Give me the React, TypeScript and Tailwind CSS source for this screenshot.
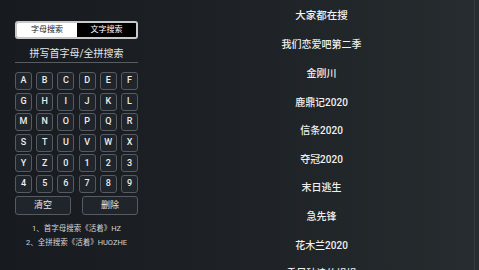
import React from 'react';

const keys = 'ABCDEFGHIJKLMNOPQRSTUVWXYZ0123456789'.split('');

const hotList = [
  '我们恋爱吧第二季',
  '金刚川',
  '鹿鼎记2020',
  '信条2020',
  '夺冠2020',
  '末日逃生',
  '急先锋',
  '花木兰2020',
  '乘风破浪的姐姐',
];

const App: React.FC = () => {
  return (
    <div
      className="w-[479px] h-[270px] overflow-hidden flex bg-gradient-to-r from-[#171a1e] via-[#1e2226] to-[#262c2f] text-white"
      style={{ fontFamily: "Roboto, 'Noto Sans CJK SC', sans-serif" }}
    >
      {/* Left: keyboard panel */}
      <div className="w-[153px] shrink-0 pl-[15px] pt-[21px] flex flex-col">
        {/* Tabs */}
        <div className="w-[123px] h-[18px] flex border-2 border-[#c9c9c9] rounded-[3px] overflow-hidden">
          <div className="w-[60px] bg-white text-[#222] text-[8px] flex items-center justify-center">字母搜索</div>
          <div className="flex-1 bg-black text-white text-[8px] flex items-center justify-center">文字搜索</div>
        </div>

        {/* Title */}
        <div className="w-[123px] mt-[6px] h-[18px] border-b border-[#585d61] text-[10px] text-[#e6e6e6] flex items-center justify-center">
          拼写首字母/全拼搜索
        </div>

        {/* Keys */}
        <div className="w-[123px] mt-[9px] grid grid-cols-6 gap-x-[4.2px] gap-y-[2.6px]">
          {keys.map(k => (
            <div
              key={k}
              className="h-[18px] rounded-[3px] border border-[#555b60] bg-[#1f252b] text-[9px] font-medium text-[#eeeeee] flex items-center justify-center"
            >
              {k}
            </div>
          ))}
        </div>

        {/* Actions */}
        <div className="w-[123px] mt-[3px] flex justify-between">
          <div className="w-[56px] h-[19px] rounded-[3px] border border-[#555b60] bg-[#1f252b] text-[9px] text-[#e6e6e6] flex items-center justify-center">清空</div>
          <div className="w-[56px] h-[19px] rounded-[3px] border border-[#555b60] bg-[#1f252b] text-[9px] text-[#e6e6e6] flex items-center justify-center">删除</div>
        </div>

        {/* Hints */}
        <div className="w-[123px] mt-[7px] flex flex-col items-center text-[7.5px] text-[#d6d6d6] leading-[14px]">
          <div>1、首字母搜索《活着》HZ</div>
          <div>2、全拼搜索《活着》HUOZHE</div>
        </div>
      </div>

      {/* Right: hot searches */}
      <div className="flex-1 pl-[16px] pt-[2px] flex flex-col">
        <div className="h-[28.6px] shrink-0 flex items-center justify-center text-[10.5px] font-medium text-[#f2f2f2]">大家都在搜</div>
        {hotList.map(t => (
          <div key={t} className="h-[28.6px] shrink-0 flex items-center justify-center text-[10px] font-medium text-[#f0f0f0]">
            {t}
          </div>
        ))}
      </div>
      <div className="w-[5px] shrink-0 border-l border-[#343b3e]" />
    </div>
  );
};

export default App;
